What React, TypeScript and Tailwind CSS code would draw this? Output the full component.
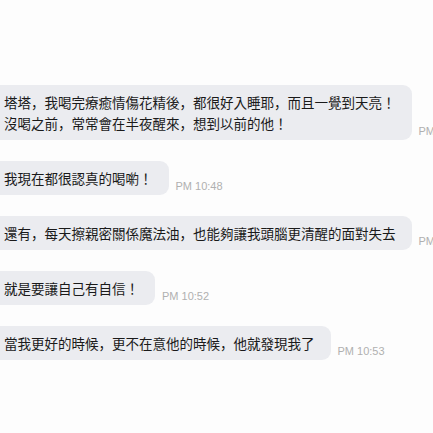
const messages = [
  {
    lines: ['塔塔，我喝完療癒情傷花精後，都很好入睡耶，而且一覺到天亮！', '沒喝之前，常常會在半夜醒來，想到以前的他！'],
    time: 'PM 10:47',
  },
  { lines: ['我現在都很認真的喝喲！'], time: 'PM 10:48' },
  { lines: ['還有，每天擦親密關係魔法油，也能夠讓我頭腦更清醒的面對失去'], time: 'PM 10:50' },
  { lines: ['就是要讓自己有自信！'], time: 'PM 10:52' },
  { lines: ['當我更好的時候，更不在意他的時候，他就發現我了'], time: 'PM 10:53' },
];

const Bubble = ({ lines, time }: { lines: string[]; time: string }) => (
  <div className="flex items-end gap-[7px]">
    <div className="shrink-0 rounded-r-[9px] bg-[#ebecf0] py-[7px] pl-[4px] pr-[16px] text-[13.5px] leading-[20.5px] text-[#1a1a1a] font-['Noto_Sans_CJK_JP','Noto_Sans_CJK_TC',sans-serif]">
      {lines.map((l) => (
        <div key={l} className="whitespace-nowrap">
          {l}
        </div>
      ))}
    </div>
    <span className="mb-[3px] shrink-0 whitespace-nowrap font-['Liberation_Sans',sans-serif] text-[11px] leading-none text-[#b0b0b0]">
      {time}
    </span>
  </div>
);

export default function App() {
  return (
    <div className="h-[433px] w-[433px] overflow-hidden bg-[#fdfdfd]">
      <div className="flex flex-col gap-[20.5px] pt-[85px]">
        {messages.map((m) => (
          <Bubble key={m.time} lines={m.lines} time={m.time} />
        ))}
      </div>
    </div>
  );
}
